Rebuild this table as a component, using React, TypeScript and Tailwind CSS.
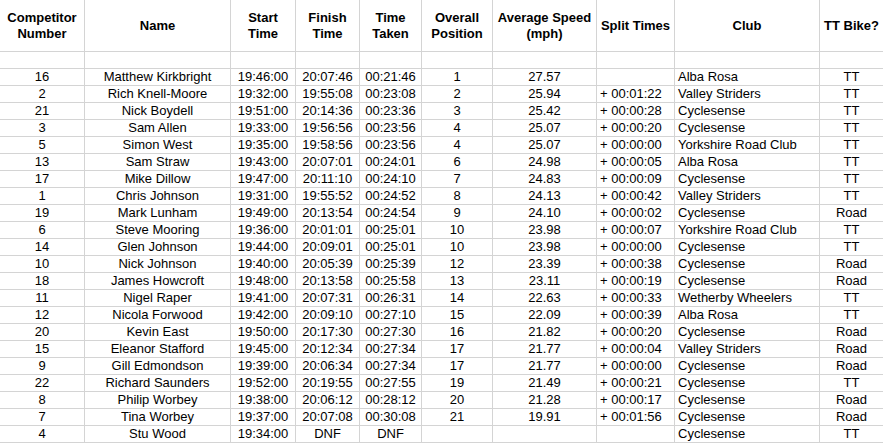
const rows: string[][] = [
  ['16', 'Matthew Kirkbright', '19:46:00', '20:07:46', '00:21:46', '1', '27.57', '', 'Alba Rosa', 'TT'],
  ['2', 'Rich Knell-Moore', '19:32:00', '19:55:08', '00:23:08', '2', '25.94', '+ 00:01:22', 'Valley Striders', 'TT'],
  ['21', 'Nick Boydell', '19:51:00', '20:14:36', '00:23:36', '3', '25.42', '+ 00:00:28', 'Cyclesense', 'TT'],
  ['3', 'Sam Allen', '19:33:00', '19:56:56', '00:23:56', '4', '25.07', '+ 00:00:20', 'Cyclesense', 'TT'],
  ['5', 'Simon West', '19:35:00', '19:58:56', '00:23:56', '4', '25.07', '+ 00:00:00', 'Yorkshire Road Club', 'TT'],
  ['13', 'Sam Straw', '19:43:00', '20:07:01', '00:24:01', '6', '24.98', '+ 00:00:05', 'Alba Rosa', 'TT'],
  ['17', 'Mike Dillow', '19:47:00', '20:11:10', '00:24:10', '7', '24.83', '+ 00:00:09', 'Cyclesense', 'TT'],
  ['1', 'Chris Johnson', '19:31:00', '19:55:52', '00:24:52', '8', '24.13', '+ 00:00:42', 'Valley Striders', 'TT'],
  ['19', 'Mark Lunham', '19:49:00', '20:13:54', '00:24:54', '9', '24.10', '+ 00:00:02', 'Cyclesense', 'Road'],
  ['6', 'Steve Mooring', '19:36:00', '20:01:01', '00:25:01', '10', '23.98', '+ 00:00:07', 'Yorkshire Road Club', 'TT'],
  ['14', 'Glen Johnson', '19:44:00', '20:09:01', '00:25:01', '10', '23.98', '+ 00:00:00', 'Cyclesense', 'TT'],
  ['10', 'Nick Johnson', '19:40:00', '20:05:39', '00:25:39', '12', '23.39', '+ 00:00:38', 'Cyclesense', 'Road'],
  ['18', 'James Howcroft', '19:48:00', '20:13:58', '00:25:58', '13', '23.11', '+ 00:00:19', 'Cyclesense', 'Road'],
  ['11', 'Nigel Raper', '19:41:00', '20:07:31', '00:26:31', '14', '22.63', '+ 00:00:33', 'Wetherby Wheelers', 'TT'],
  ['12', 'Nicola Forwood', '19:42:00', '20:09:10', '00:27:10', '15', '22.09', '+ 00:00:39', 'Alba Rosa', 'TT'],
  ['20', 'Kevin East', '19:50:00', '20:17:30', '00:27:30', '16', '21.82', '+ 00:00:20', 'Cyclesense', 'Road'],
  ['15', 'Eleanor Stafford', '19:45:00', '20:12:34', '00:27:34', '17', '21.77', '+ 00:00:04', 'Valley Striders', 'Road'],
  ['9', 'Gill Edmondson', '19:39:00', '20:06:34', '00:27:34', '17', '21.77', '+ 00:00:00', 'Cyclesense', 'Road'],
  ['22', 'Richard Saunders', '19:52:00', '20:19:55', '00:27:55', '19', '21.49', '+ 00:00:21', 'Cyclesense', 'TT'],
  ['8', 'Philip Worbey', '19:38:00', '20:06:12', '00:28:12', '20', '21.28', '+ 00:00:17', 'Cyclesense', 'Road'],
  ['7', 'Tina Worbey', '19:37:00', '20:07:08', '00:30:08', '21', '19.91', '+ 00:01:56', 'Cyclesense', 'Road'],
  ['4', 'Stu Wood', '19:34:00', 'DNF', 'DNF', '', '', '', 'Cyclesense', 'TT'],
];

const headers: string[][] = [
  ['Competitor', 'Number'],
  ['Name'],
  ['Start', 'Time'],
  ['Finish', 'Time'],
  ['Time', 'Taken'],
  ['Overall', 'Position'],
  ['Average Speed', '(mph)'],
  ['Split Times'],
  ['Club'],
  ['TT Bike?'],
];

// split times (7) and club (8) are left aligned, the rest centred
const alignFor = (i: number) => (i === 7 || i === 8 ? 'justify-start pl-[3px]' : 'justify-center');
const borderFor = (i: number) => (i === 9 ? 'border-b' : 'border-b border-r');

export default function App() {
  return (
    <div className="w-[883px] h-[443px] overflow-hidden bg-white text-black text-[13px] font-['Liberation_Sans',Arial,sans-serif]">
      <div className="grid grid-cols-[85px_146px_65px_64px_62px_71px_104px_78px_145px_63px]">
        {headers.map((lines, i) => (
          <div
            key={'h' + i}
            className={`h-[52px] ${borderFor(i)} border-[#d4d4d4] flex flex-col items-center justify-center font-bold leading-4 text-center whitespace-nowrap`}
          >
            {lines.map((l) => (
              <span key={l}>{l}</span>
            ))}
          </div>
        ))}

        {headers.map((_, i) => (
          <div key={'b' + i} className={`h-[17px] ${borderFor(i)} border-[#d4d4d4]`} />
        ))}

        {rows.map((row, r) =>
          row.map((cell, i) => (
            <div
              key={r + '-' + i}
              className={`h-[17px] ${borderFor(i)} border-[#d4d4d4] flex items-center ${alignFor(i)} leading-4 whitespace-nowrap`}
            >
              {cell}
            </div>
          ))
        )}
      </div>
    </div>
  );
}
